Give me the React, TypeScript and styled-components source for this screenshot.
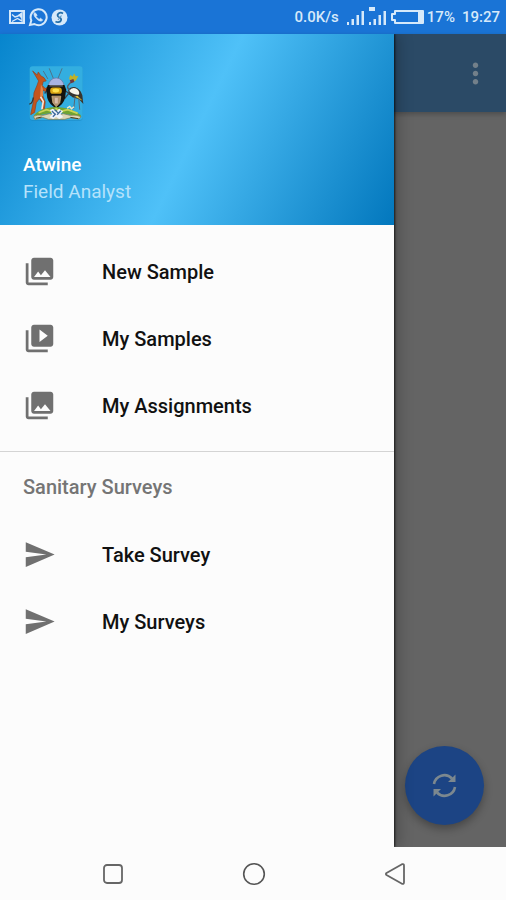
import React from 'react';
import styled, { createGlobalStyle } from 'styled-components';
import { MdMoreVert, MdPhotoLibrary, MdSend, MdVideoLibrary } from 'react-icons/md';

const GlobalStyle = createGlobalStyle`
  *, *::before, *::after { box-sizing: border-box; }
  body { margin: 0; font-family: Roboto, "Noto Sans", sans-serif; }
`;

const Screen = styled.div`
  display: flex;
  flex-direction: column;
  min-height: 100vh;
  background: #fcfcfc;
`;

const StatusBar = styled.header`
  display: flex;
  align-items: center;
  justify-content: space-between;
  height: 34px;
  padding: 0 6px 0 8px;
  background: #1a74d6;
  color: #d6e9fa;
  font-size: 15px;
  font-weight: 500;
`;

const StatusGroup = styled.div<{ $gap: number }>`
  display: flex;
  align-items: center;
  gap: ${(p) => p.$gap}px;
`;

const Rate = styled.span`
  margin-right: 4px;
`;

const Clock = styled.time`
  margin-left: 4px;
`;

const Stage = styled.div`
  position: relative;
  display: flex;
  flex: 1;
`;

const Underlay = styled.main`
  display: flex;
  flex: 1;
  flex-direction: column;
  justify-content: space-between;
  align-items: flex-end;
  background: #646464;
`;

const AppBar = styled.div`
  display: flex;
  align-items: center;
  justify-content: flex-end;
  align-self: stretch;
  height: 78px;
  padding-right: 14px;
  background: #2b4a66;
  box-shadow: 0 2px 5px rgba(0, 0, 0, 0.25);
`;

const IconButton = styled.button`
  display: flex;
  align-items: center;
  justify-content: center;
  padding: 0;
  border: 0;
  background: none;
  color: #73808a;
`;

const Fab = styled.button`
  display: flex;
  align-items: center;
  justify-content: center;
  width: 79px;
  height: 79px;
  margin: 0 22px 22px 0;
  padding: 0;
  border: 0;
  border-radius: 50%;
  background: #1c4484;
  box-shadow: 0 4px 8px rgba(0, 0, 0, 0.3);
`;

const Drawer = styled.aside`
  position: absolute;
  inset: 0 112px 0 0;
  background: #fcfcfc;
  box-shadow: 1px 0 2px rgba(0, 0, 0, 0.7), 4px 0 14px rgba(0, 0, 0, 0.25);
  clip-path: inset(0 -24px 0 0);
`;

const Profile = styled.section`
  height: 191px;
  padding: 31px 23px 0;
  background: linear-gradient(116deg, #0785cd, #4fc1f8 50%, #0277bd);
  font-size: 19px;
  line-height: 27px;
`;

const Crest = styled.svg`
  display: block;
  margin: 0 0 29px 5px;
`;

const ProfileName = styled.div`
  color: #ffffff;
  font-weight: 500;
`;

const ProfileRole = styled.div`
  color: #b5e2fb;
`;

const MenuGroup = styled.ul<{ $padded?: boolean }>`
  margin: 0;
  padding: ${(p) => (p.$padded ? '13px 0 12px' : '0')};
  list-style: none;
`;

const MenuLink = styled.a`
  display: flex;
  align-items: center;
  gap: 46px;
  height: 67px;
  padding: 0 23px;
  color: #111111;
  font-size: 20px;
  font-weight: 500;
  text-decoration: none;

  svg { color: #707070; }
`;

const Divider = styled.hr`
  height: 1px;
  margin: 0;
  border: 0;
  background: #d4d4d4;
`;

const Subheader = styled.h2`
  display: flex;
  align-items: center;
  height: 69px;
  margin: 0;
  padding: 0 23px;
  color: #757575;
  font-size: 20px;
  font-weight: 500;
`;

const SystemNav = styled.nav`
  display: grid;
  grid-template-columns: repeat(3, 1fr);
  height: 53px;
  padding: 0 41px 0 43px;
`;

const CoatOfArms = () => (
  <Crest width="57" height="57" viewBox="40 28 172 172" role="img" aria-label="Coat of arms">
    <rect x="45" y="34" width="160" height="162" rx="9" fill="#1680b8" opacity="0.5" />
    <rect x="45" y="32" width="160" height="162" rx="9" fill="#33aee0" />
    <path d="M104 38l14 34M143 38l-14 34M86 46l14 24" stroke="#4f7388" strokeWidth="3" fill="none" />
    <path d="M54 46l14 12 3-9 8 12 9 5 7 10-9 2-3 12 9 9 12-7 3 6-15 10-8-4 1 18 7 17-3 26-6 6 1-28-10-13-9 12-5 29-12 7 8-38 2-28 9-22 5-14z" fill="#c4551c" stroke="#8f4020" strokeWidth="2" />
    <path d="M79 86l6 14v20l-9 10z" fill="#e5854a" />
    <path d="M78 124l8 14-4 24" fill="none" stroke="#f7e6dc" strokeWidth="5" />
    <path d="M56 126q-2 18-12 20" fill="none" stroke="#38302e" strokeWidth="4" />
    <path d="M151 104l20 16M150 130l22-28M98 104l-8 10" stroke="#3b4350" strokeWidth="4" />
    <path d="M101 91q4-23 24-24 20 1 24 24z" fill="#a9b3e2" stroke="#6873a3" strokeWidth="2" />
    <path d="M100 88h50l5 14-3 25q-5 21-27 32-21-11-27-32l-3-25z" fill="#15130f" />
    <path d="M105 91h40" stroke="#8a8a90" strokeWidth="3" />
    <rect x="107" y="96" width="35" height="19" rx="8" fill="#d9a514" />
    <ellipse cx="124" cy="105" rx="10" ry="6" fill="#ffe04a" />
    <path d="M112 122h27l-3 20-11 12-10-12z" fill="#b0906f" stroke="#dcbd85" strokeWidth="2" />
    <path d="M121 127h9v17h-9z" fill="#d8bda8" />
    <path d="M161 104q7-11 22-9 16 6 21 24l3 27-13-15-20-6-10-9z" fill="#37342f" />
    <path d="M164 106q8-12 21-7 12 8 9 18-18 3-30-11z" fill="#f8f5ea" />
    <path d="M189 121l16 15-12-6-12-7z" fill="#e8c632" />
    <path d="M167 103q-9-3-7-12 5-7 12-13" fill="none" stroke="#5b5a66" strokeWidth="4" />
    <path d="M164 70l3-12 8 5 4-10 5 9 8-1-7 13-10 6z" fill="#c0b227" />
    <path d="M166 74l11-4 3 9-10 4z" fill="#6e3840" />
    <path d="M182 122l-4 38M193 127l3 36" stroke="#5c6670" strokeWidth="3" />
    <path d="M58 180q14-16 40-22l26-4 28 4q26 5 48 22l-4 6-28-8-44-8-44 8-20 6z" fill="#6fa432" />
    <path d="M72 172l24-9 16 5 13-8 15 8 20-5 30 11" fill="none" stroke="#c9d556" strokeWidth="5" />
    <path d="M57 183q10-6 28-3l20-5 20 5 22-5 20 5q20-3 33 4l-6 7-25-4-18 5h-49l-18-6-23 7z" fill="#dcd8b8" stroke="#86733f" strokeWidth="2" />
    <path d="M106 164l9-4 10 8 9-8 12 8-8 8 8 9-12 6-9-7-9 7-11-5 8-10z" fill="#eef4fc" />
    <path d="M112 167l9 9m-1-14l12 12m7-8l-11 12m-13 6l9-9" stroke="#3f6a9c" strokeWidth="4" />
    <path d="M63 189l18-4m87 1l24 4" stroke="#4c4020" strokeWidth="3" />
    <path d="M158 158l8-5 5 7 8-6" stroke="#eee9cd" strokeWidth="4" fill="none" />
  </Crest>
);

const PictureGlyph = () => (
  <svg width="17" height="16" viewBox="0 0 17 16" fill="none" stroke="currentColor">
    <rect x="2" y="2" width="14" height="12" strokeWidth="2" />
    <path d="M4 5.500L7 8l3-1 4-3v8L9.500 9.500 4 12.500" strokeWidth="1.400" />
    <path d="M10 6l4-2v6z" fill="currentColor" stroke="none" />
  </svg>
);

const ChatGlyph = () => (
  <svg width="20" height="20" viewBox="0 0 20 20" fill="none" stroke="currentColor">
    <path d="M2 18l1.300-4.600A8 8 0 1 1 6.400 17z" strokeWidth="2" />
    <path d="M7 5.500c-2 1-.8 4 1.500 6.200s5 3.300 6.200 1.200l-2.300-1.600-1.200 1.100c-1.500-.6-2.600-1.800-3.200-3.100l1.100-1.100z" fill="currentColor" strokeWidth="0.800" />
  </svg>
);

const SpiralGlyph = () => (
  <svg width="17" height="17" viewBox="0 0 17 17">
    <circle cx="8.500" cy="8.500" r="8" fill="currentColor" />
    <path d="M12 4.500C9 2.500 5.500 5 7 7.500c1.500 1.500 4 1.500 3 4-1 2-4 2-5.500 1" fill="none" stroke="#226da8" strokeWidth="1.700" />
    <path d="M10.500 6.500L7 11" fill="none" stroke="#5f9aca" strokeWidth="1.200" />
  </svg>
);

const SignalGlyph = ({ tagged = false }: { tagged?: boolean }) => (
  <svg width="19" height="22" viewBox="0 0 19 22" fill="currentColor">
    <path d="M1 16h2v3H1zM5.500 13H8v6H5.500zM10.500 9H13v10h-2.500zM15.500 5H18v14h-2.500z" />
    {tagged && <path d="M1 1h6v4H1z" />}
  </svg>
);

const BatteryGlyph = () => (
  <svg width="34" height="16" viewBox="0 0 34 16" fill="none" stroke="currentColor">
    <path d="M5 2h28v12H5v-3H2V5h3z" strokeWidth="2" strokeLinejoin="round" />
    <path d="M28 3h5v10h-5z" fill="currentColor" stroke="none" />
  </svg>
);

const SyncGlyph = () => (
  <svg width="27" height="27" viewBox="0 0 27 27" fill="none" stroke="#7c888f" strokeWidth="2.600">
    <path d="M3 12A10.500 10.500 0 0 1 21 6.500M24 15A10.500 10.500 0 0 1 6 20.500" />
    <path d="M24.500 2.500v7.500H17zM2.500 24.500v-7.500H10z" fill="#7c888f" stroke="none" />
  </svg>
);

const RecentsGlyph = () => (
  <svg width="22" height="22" viewBox="0 0 22 22" fill="none" stroke="#666" strokeWidth="1.800">
    <rect x="2" y="2" width="18" height="18" rx="3" />
  </svg>
);

const HomeGlyph = () => (
  <svg width="24" height="24" viewBox="0 0 24 24" fill="none" stroke="#555" strokeWidth="1.600">
    <circle cx="12" cy="12" r="10.300" />
  </svg>
);

const BackGlyph = () => (
  <svg width="22" height="24" viewBox="0 0 22 24" fill="none" stroke="#666" strokeWidth="1.800" strokeLinejoin="round">
    <path d="M18 2.200L2.500 11q-1.200 1 0 2L18 21.800q2 .5 2-1.500V3.700q0-2-2-1.500z" />
  </svg>
);

const sampleItems = [
  { label: 'New Sample', Icon: MdPhotoLibrary },
  { label: 'My Samples', Icon: MdVideoLibrary },
  { label: 'My Assignments', Icon: MdPhotoLibrary },
];

const surveyItems = [
  { label: 'Take Survey', Icon: MdSend },
  { label: 'My Surveys', Icon: MdSend },
];

const MenuItems = ({ items, padded }: { items: typeof sampleItems; padded?: boolean }) => (
  <MenuGroup $padded={padded}>
    {items.map(({ label, Icon }) => (
      <li key={label}>
        <MenuLink href="#">
          <Icon size={33} />
          {label}
        </MenuLink>
      </li>
    ))}
  </MenuGroup>
);

export default function App() {
  return (
    <Screen>
      <GlobalStyle />
      <StatusBar>
        <StatusGroup $gap={3}>
          <PictureGlyph />
          <ChatGlyph />
          <SpiralGlyph />
        </StatusGroup>
        <StatusGroup $gap={3}>
          <Rate>0.0K/s</Rate>
          <SignalGlyph />
          <SignalGlyph tagged />
          <BatteryGlyph />
          <span>17%</span>
          <Clock>19:27</Clock>
        </StatusGroup>
      </StatusBar>
      <Stage>
        <Underlay>
          <AppBar>
            <IconButton aria-label="More options">
              <MdMoreVert size={33} />
            </IconButton>
          </AppBar>
          <Fab aria-label="Sync">
            <SyncGlyph />
          </Fab>
        </Underlay>
        <Drawer>
          <Profile>
            <CoatOfArms />
            <ProfileName>Atwine</ProfileName>
            <ProfileRole>Field Analyst</ProfileRole>
          </Profile>
          <MenuItems items={sampleItems} padded />
          <Divider />
          <Subheader>Sanitary Surveys</Subheader>
          <MenuItems items={surveyItems} />
        </Drawer>
      </Stage>
      <SystemNav>
        <IconButton aria-label="Recent apps"><RecentsGlyph /></IconButton>
        <IconButton aria-label="Home"><HomeGlyph /></IconButton>
        <IconButton aria-label="Back"><BackGlyph /></IconButton>
      </SystemNav>
    </Screen>
  );
}
